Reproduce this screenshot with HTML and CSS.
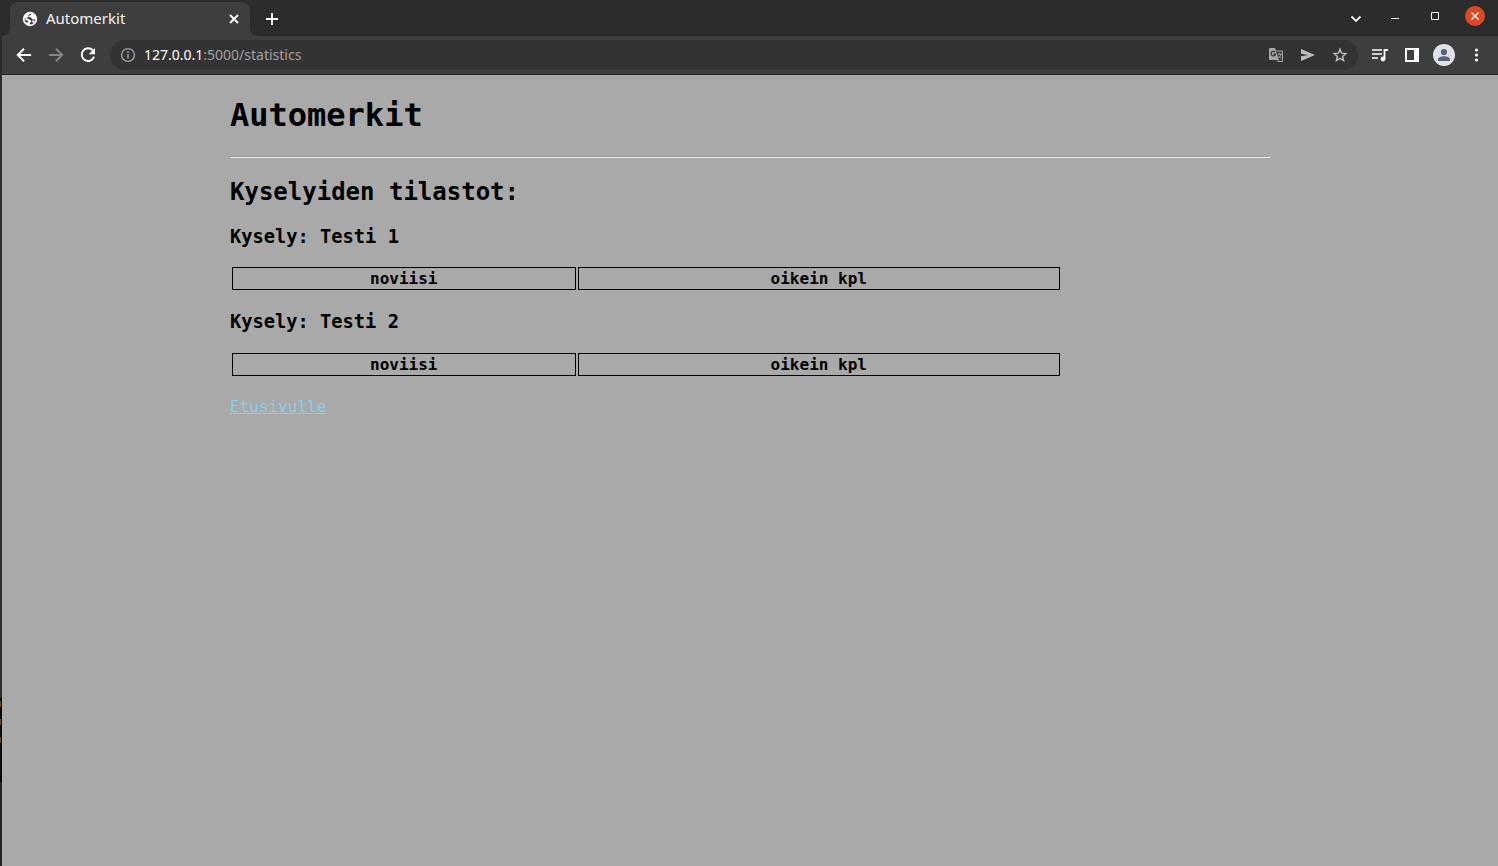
FILE: index.html
```html
<!DOCTYPE html>
<html lang="fi">
<head>
<meta charset="utf-8">
<title>Automerkit</title>
<link rel="stylesheet" href="styles.css">
</head>
<body>
<div class="desktop-edge" aria-hidden="true"><i></i><i></i><i></i></div>
<div class="window">
  <header class="tabstrip">
    <div class="tab">
      <svg class="globe" viewBox="0 0 16 16" width="16" height="16"><circle cx="8" cy="8" r="7.200" fill="#fff"/><path d="M10 2.600C7.500 2.600 6 4 6.600 5.400c.4 1 1.900.8 2.600 1.400.7.700.5 1.700 1.500 1.800h2.700c-.2 1.600-1 2.900-2.200 3.800-.9.700-2 1-3.400 1.100v-1.300c.2-1 1.400-.9 1.600-1.800.2-1.200-1.400-1.200-2-1.900C6.700 7.600 5 7.400 2.600 7.600c-.1 1.600.3 2.900 1.200 4 .8-.2 1.800 0 2.300-.6.400-.6.100-1.300-.6-1.500L2.600 9" fill="#3c3c3c"/><path d="M10.300 9.500h2.500c-.3 1.100-.9 1.900-1.700 2.500-.9-.5-1.200-1.500-.8-2.500z" fill="#fff"/></svg>
      <span class="tab-title">Automerkit</span>
      <button class="tab-close" aria-label="Close tab"><svg viewBox="0 0 16 16" width="16" height="16"><path d="M4 4l8 8M12 4l-8 8" stroke="#fff" stroke-width="1.800" fill="none"/></svg></button>
    </div>
    <button class="new-tab" aria-label="New tab"><svg viewBox="0 0 16 16" width="16" height="16"><path d="M8 2v12M2 8h12" stroke="#fff" stroke-width="1.800"/></svg></button>
    <div class="window-controls">
      <button aria-label="Search tabs"><svg viewBox="0 0 20 20" width="20" height="20"><path d="M6.500 10.500l4.500 4.500 4.500-4.500" fill="none" stroke="#eee" stroke-width="1.800"/></svg></button>
      <button aria-label="Minimize"><svg viewBox="0 0 20 20" width="20" height="20"><path d="M6 12.500h8" stroke="#fff"/></svg></button>
      <button aria-label="Maximize"><svg viewBox="0 0 20 20" width="20" height="20"><path d="M6.500 6.500h7v7h-7z" fill="none" stroke="#fff"/></svg></button>
      <button aria-label="Close window"><svg viewBox="0 0 20 20" width="20" height="20"><circle cx="10" cy="10" r="10" fill="#dc4a25"/><path d="M6.500 6.500l7 7M13.500 6.500l-7 7" stroke="#fff" stroke-width="1.200"/></svg></button>
    </div>
  </header>
  <nav class="toolbar" aria-label="Browser">
    <button aria-label="Back"><svg viewBox="0 0 24 24" width="20" height="20"><path d="M20.500 12H5M12 4.500L4.500 12l7.500 7.500" fill="none" stroke="#fff" stroke-width="2.300"/></svg></button>
    <button aria-label="Forward"><svg viewBox="0 0 24 24" width="20" height="20"><path d="M3.500 12H19M12 4.500l7.500 7.500-7.500 7.500" fill="none" stroke="#858585" stroke-width="2.300"/></svg></button>
    <button aria-label="Reload"><svg viewBox="0 0 24 24" width="20" height="20"><path d="M17.800 6.500A7.600 7.600 0 1 0 19.300 14" fill="none" stroke="#fff" stroke-width="2.200"/><path d="M20.300 3.500v7.500h-7.500z" fill="#fff"/></svg></button>
    <div class="omnibox">
      <button class="site-info" aria-label="Site information"><svg viewBox="0 0 16 16" width="16" height="16"><circle cx="8" cy="8" r="6.400" fill="none" stroke="#9aa0a6" stroke-width="1.400"/><path d="M8 7v4.500M8 4.300v1.600" stroke="#9aa0a6" stroke-width="1.500"/></svg></button>
      <a class="address" href="#"><b>127.0.0.1</b>:5000/statistics</a>
      <div class="page-actions">
        <button aria-label="Translate"><svg viewBox="0 0 16 16" width="16" height="16"><path d="M8 4h6.500v10.500H10" fill="none" stroke="#a9a9a9"/><path d="M2 1h5l3.800 12H2a1 1 0 0 1-1-1V2a1 1 0 0 1 1-1z" fill="#a9a9a9"/><path d="M7 5a2.300 2.300 0 1 0 .6 2.200H5.400" fill="none" stroke="#333" stroke-width="1.200"/><path d="M9.500 7H13.700M11.500 5.800V7M13 7c-.4 1.800-1.300 3-2.500 3.900M10.300 8.500l3 3.300M10.800 12.500l-1.500 2" fill="none" stroke="#a9a9a9"/></svg></button>
        <button aria-label="Share"><svg viewBox="0 0 16 16" width="16" height="16"><path d="M1 2l14 6-14 6V9.300L8.500 8 1 6.700z" fill="#bdbdbd"/></svg></button>
        <button aria-label="Bookmark"><svg viewBox="0 0 16 16" width="16" height="16"><path d="M8 2.200l1.600 4 4.300.4-3.300 2.800 1 4.200L8 11.400l-3.600 2.200 1-4.200-3.300-2.800 4.300-.4z" fill="none" stroke="#bdbdbd" stroke-width="1.400"/></svg></button>
      </div>
    </div>
    <div class="browser-actions">
      <button aria-label="Media"><svg viewBox="0 0 16 16" width="16" height="16"><path d="M0 3h10M0 7h10M0 11h6" stroke="#fff" stroke-width="1.600"/><path d="M12.500 12V3H16" fill="none" stroke="#fff" stroke-width="1.800"/><circle cx="11" cy="12" r="2.400" fill="#fff"/></svg></button>
      <button aria-label="Side panel"><svg viewBox="0 0 16 16" width="16" height="16"><path d="M1 1h14v14H1zM3 3v10h7V3z" fill="#fff" fill-rule="evenodd"/></svg></button>
      <button aria-label="Profile"><svg viewBox="0 0 22 22" width="22" height="22"><circle cx="11" cy="11" r="11" fill="#dee1e6"/><circle cx="11" cy="8" r="3.100" fill="#596377"/><path d="M5 17v-1.500c0-2.200 3.500-3.200 6-3.200s6 1 6 3.200V17z" fill="#596377"/></svg></button>
      <button aria-label="Menu"><svg viewBox="0 0 16 16" width="16" height="16"><g fill="#fff"><circle cx="8.500" cy="3" r="1.600"/><circle cx="8.500" cy="8" r="1.600"/><circle cx="8.500" cy="13" r="1.600"/></g></svg></button>
    </div>
  </nav>
  <main class="page">
    <div class="content">
      <h1>Automerkit</h1>
      <hr>
      <h2>Kyselyiden tilastot:</h2>
      <h3>Kysely: Testi 1</h3>
      <table class="stats">
        <tr><th>noviisi</th><th>oikein kpl</th></tr>
      </table>
      <h3>Kysely: Testi 2</h3>
      <table class="stats">
        <tr><th>noviisi</th><th>oikein kpl</th></tr>
      </table>
      <p class="home"><a href="#">Etusivulle</a></p>
    </div>
  </main>
</div>
</body>
</html>
```
FILE: styles.css
```css
* { box-sizing: border-box; }
body {
  margin: 0;
  min-height: 100vh;
  display: flex;
  background: #a9a9a9;
  font-family: "Noto Sans", sans-serif;
}
button {
  display: flex;
  align-items: center;
  justify-content: center;
  flex: none;
  padding: 0;
  border: 0;
  background: none;
}
svg { display: block; }
.desktop-edge {
  width: 2px;
  flex: none;
  display: flex;
  flex-direction: column;
  gap: 12px;
  padding-top: 701px;
  background: linear-gradient(#2c2c2c 698px, #080808 698px, #080808 782px, #242424 782px);
}
.desktop-edge i { width: 1px; height: 6px; background: #6b4420; }
.window { flex: 1; min-width: 0; display: flex; flex-direction: column; }
.tabstrip {
  height: 36px;
  display: flex;
  align-items: flex-start;
  padding-left: 8px;
  background: #2c2c2c;
  box-shadow: inset 0 -1px #232323;
}
.tab {
  position: relative;
  width: 240px;
  height: 34px;
  margin-top: 2px;
  display: flex;
  align-items: center;
  gap: 8px;
  padding: 0 8px 0 12px;
  border-radius: 8px 8px 0 0;
  background: #3e3e3e;
  color: #f5f5f5;
  font-size: 15px;
}
.tab::before, .tab::after {
  content: "";
  position: absolute;
  bottom: 0;
  width: 8px;
  height: 8px;
}
.tab::before { right: 100%; background: radial-gradient(circle at 0 0, #2c2c2c 8px, #3e3e3e 8px); }
.tab::after { left: 100%; background: radial-gradient(circle at 100% 0, #2c2c2c 8px, #3e3e3e 8px); }
.tab-title { flex: 1; padding-bottom: 2px; line-height: 20px; }
.new-tab { width: 28px; height: 34px; margin: 2px 0 0 8px; }
.window-controls {
  display: flex;
  gap: 20px;
  margin-left: auto;
  padding: 6px 13px 0 0;
}
.toolbar {
  height: 39px;
  display: flex;
  align-items: center;
  gap: 12px;
  padding: 0 14px 0 12px;
  background: #3e3e3e;
  border-bottom: 1px solid #232323;
}
.omnibox {
  flex: 1;
  min-width: 0;
  height: 30px;
  display: flex;
  align-items: center;
  gap: 8px;
  margin-right: 2px;
  padding: 0 10px;
  border-radius: 15px;
  background: #333;
}
.address {
  color: #a0a0a0;
  font-size: 14px;
  line-height: 20px;
  text-decoration: none;
}
.address b { color: #fff; font-weight: 400; }
.page-actions { display: flex; gap: 16px; margin-left: auto; }
.browser-actions { display: flex; align-items: center; gap: 13px; }
.browser-actions button:first-child { margin-right: 3px; }
.page {
  flex: 1;
  padding: 0 20px;
  background: #a9a9a9;
  color: #000;
  font-family: "DejaVu Sans Mono", monospace;
  font-size: 16px;
}
.content { max-width: 1040px; margin: 0 auto; }
.stats { width: 80%; }
.stats th { border: 1px solid #000; }
.home { margin: 19px 0; }
.home a { color: #87ceeb; }
```
